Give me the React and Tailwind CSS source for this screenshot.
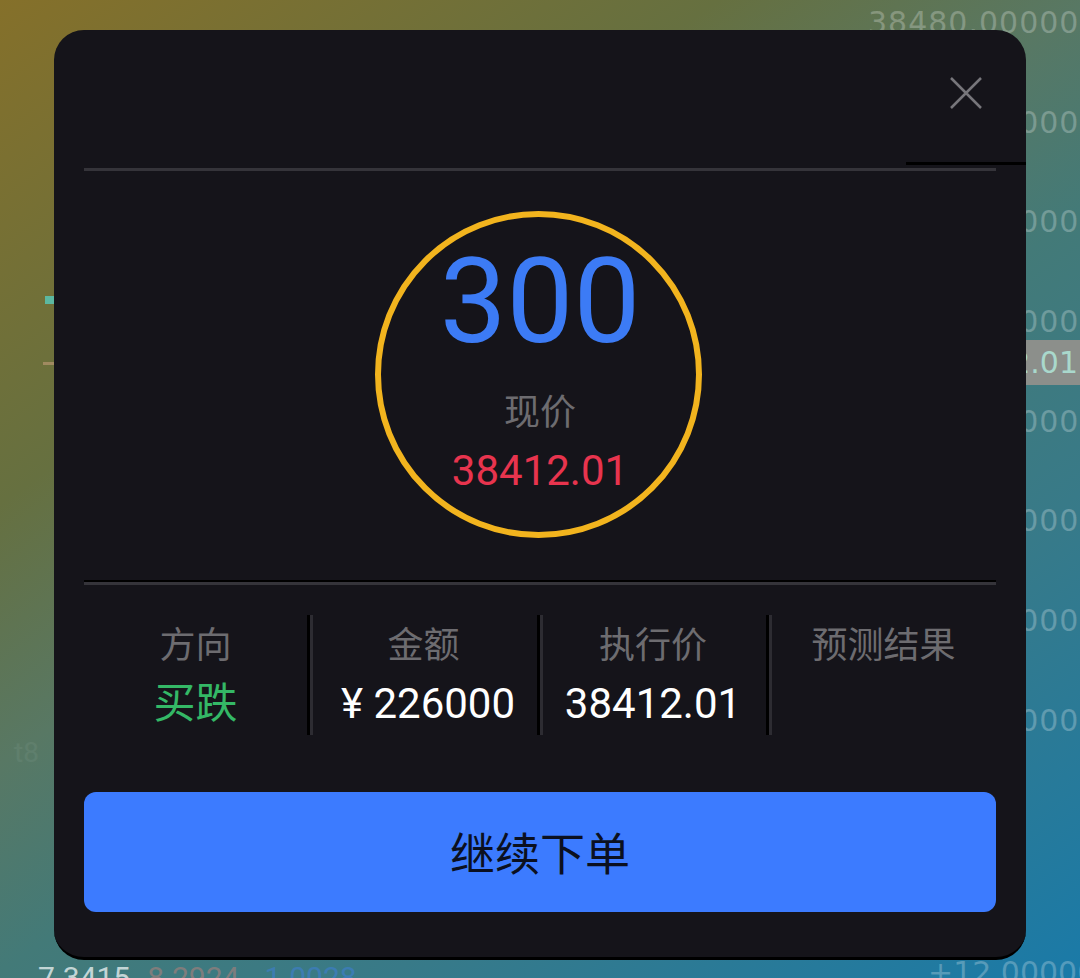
import React from 'react';

const font = "font-['Roboto','Noto_Sans_CJK_SC',sans-serif]";

const axisLabels = ['38480.00000', '38470.00000', '38460.00000', '38450.00000', '38440.00000', '38430.00000', '38420.00000', '38410.00000'];

const stats = [
  { label: '方向', value: '买跌', valueCls: 'text-[#34b866]', cellCls: 'border-r-[3px] border-black shadow-[3px_0_0_#2d2c32]' },
  { label: '金额', value: '¥ 226000', valueCls: 'pl-[9px] text-white', cellCls: 'border-r-[3px] border-black shadow-[3px_0_0_#2d2c32]' },
  { label: '执行价', value: '38412.01', valueCls: 'text-white', cellCls: 'border-r-[3px] border-black shadow-[3px_0_0_#2d2c32]' },
  { label: '预测结果', value: '', valueCls: '', cellCls: 'pl-[2px]' },
];

const Backdrop = () => (
  <>
    <div className="absolute left-[868px] top-[5px] flex flex-col font-['DejaVu_Sans',sans-serif] text-[30px] leading-[36px] tracking-[1px] text-white/25">
      {axisLabels.map((a) => (
        <span key={a} className="h-[99.7px] whitespace-nowrap">{a}</span>
      ))}
    </div>
    <div className="absolute left-[960px] top-[340px] flex h-[45px] w-[120px] items-center justify-end bg-[#8c8f8b] pr-[2px] font-['DejaVu_Sans',sans-serif] text-[30px] text-[#a9d8cc]">
      2.01
    </div>
    <div className="absolute left-[45px] top-[296px] h-[8px] w-[9px] bg-[#5cb8a0]" />
    <div className="absolute left-[43px] top-[362px] h-[3px] w-[11px] bg-[#a08a60]" />
    <span className="absolute left-[14px] top-[736px] text-[28px] leading-[34px] text-white/5">t8</span>
    <div className="absolute left-[38px] top-[960px] flex whitespace-nowrap text-[30px] leading-[36px]">
      <span className="text-white/70">7.3415</span>
      <span className="ml-[17px] text-[#c0807a]/50">8.2924</span>
      <span className="ml-[25px] text-[#3f7fe0]/50">1.0028</span>
    </div>
    <span className="absolute left-[928px] top-[955px] whitespace-nowrap font-['DejaVu_Sans',sans-serif] text-[30px] leading-[36px] text-white/25">+12.00000</span>
  </>
);

export default function App() {
  return (
    <div className={`relative h-[978px] w-[1080px] overflow-hidden bg-[linear-gradient(145deg,#85702a_0%,#667040_29%,#587864_44%,#437a78_56%,#387a88_72%,#1a7aa8_100%)] pl-[54px] pt-[30px] ${font}`}>
      <Backdrop />

      <div className="relative h-[930px] w-[972px] rounded-[30px] border-b-[3px] border-black bg-[#15141a] px-[30px]">
        {/* Header */}
        <div className="relative h-[138px]">
          <button className="absolute right-[14px] top-[47px] text-[#77767b]">
            <svg width="32" height="32" viewBox="0 0 32 32" fill="none" stroke="currentColor" strokeWidth="2.5">
              <path d="M1 1 L31 31 M31 1 L1 31" />
            </svg>
          </button>
        </div>
        <div className="absolute right-0 top-[132px] h-[3px] w-[120px] bg-black" />
        <div className="h-[3px] bg-[#35343a]" />

        {/* Countdown */}
        <div className="ml-[291px] mt-[40px] flex h-[327px] w-[327px] flex-col items-center rounded-full border-[6px] border-[#f2b41e] pl-[3px]">
          <div className="mt-[25px] text-[119px] font-[430] leading-[120px] text-[#3c7bf5]">300</div>
          <div className="mt-[29px] text-[36px] leading-[44px] text-[#6d6c70]">现价</div>
          <div className="mt-[13px] text-[42px] leading-[46px] text-[#e8344e]">38412.01</div>
        </div>

        <div className="mt-[42px] h-[5px] border-t-[2px] border-black bg-[#35343a]" />

        {/* Stats */}
        <div className="mt-[30px] grid h-[120px] grid-cols-[226px_230px_229px_227px]">
          {stats.map((s) => (
            <div key={s.label} className={`flex flex-col items-center ${s.cellCls}`}>
              <div className="mt-[8px] text-[36px] leading-[46px] text-[#6d6c70]">{s.label}</div>
              <div className={`mt-[11px] text-[42px] leading-[48px] ${s.valueCls}`}>{s.value}</div>
            </div>
          ))}
        </div>

        <button className="mt-[57px] flex h-[120px] w-full items-center justify-center rounded-[12px] bg-[#3c7bff] pt-[7px] text-[45px] text-[#0b1020]">
          继续下单
        </button>
      </div>
    </div>
  );
}
